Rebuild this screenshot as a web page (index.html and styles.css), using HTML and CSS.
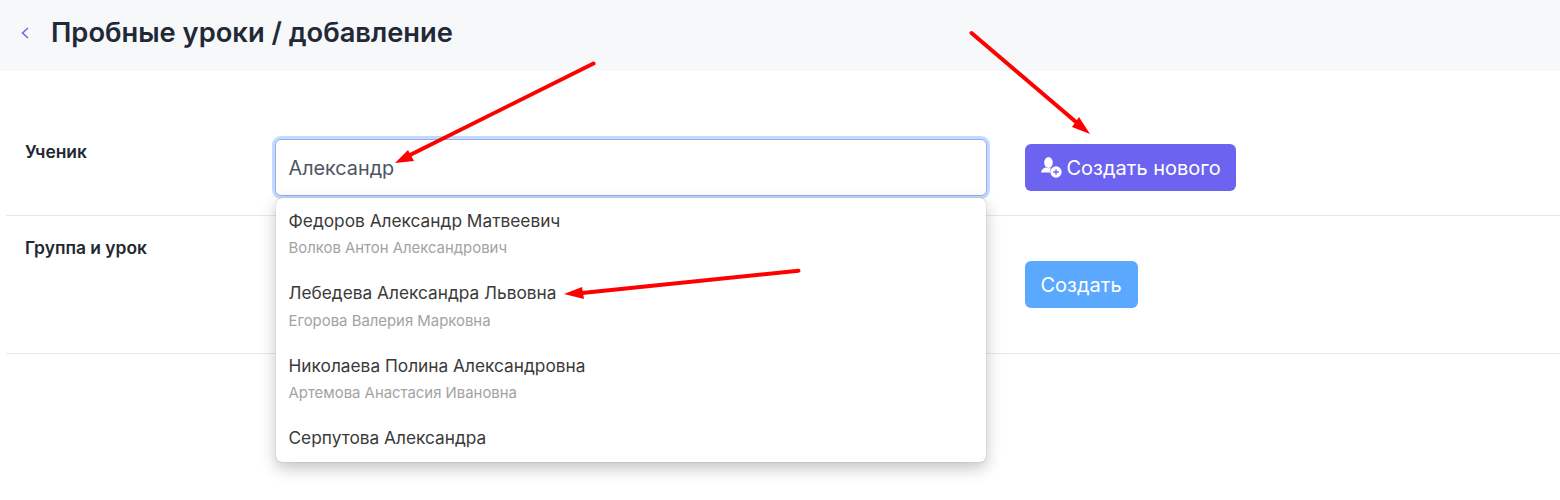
FILE: index.html
```html
<!DOCTYPE html>
<html lang="ru">
<head>
    <meta charset="UTF-8">
    <meta name="viewport" content="width=device-width, initial-scale=1.0">
    <title>Пробные уроки / добавление</title>
    <link rel="stylesheet" href="styles.css">
</head>
<body>
    <header class="page-header">
        <svg class="back-icon" width="8" height="12" viewBox="0 0 8 12"><path d="M7 1 L1.500 6 L7 11" fill="none" stroke="#6c63f0" stroke-width="1.500"/></svg>
        <h1 class="page-title">Пробные уроки / добавление</h1>
    </header>

    <main class="form">
        <div class="row row-student">
            <div class="row-label">Ученик</div>
            <div class="field">
                <div class="input">Александр</div>
                <ul class="dropdown">
                    <li class="option">
                        <div class="option-name">Федоров Александр Матвеевич</div>
                        <div class="option-parent">Волков Антон Александрович</div>
                    </li>
                    <li class="option">
                        <div class="option-name">Лебедева Александра Львовна</div>
                        <div class="option-parent">Егорова Валерия Марковна</div>
                    </li>
                    <li class="option">
                        <div class="option-name">Николаева Полина Александровна</div>
                        <div class="option-parent">Артемова Анастасия Ивановна</div>
                    </li>
                    <li class="option">
                        <div class="option-name">Серпутова Александра</div>
                    </li>
                </ul>
            </div>
            <button class="btn btn-primary">
                <svg class="btn-icon" width="21" height="22" viewBox="0 0 21 22">
                    <ellipse cx="7.500" cy="5.500" rx="4.300" ry="5.400" fill="#fff"/>
                    <path d="M0 15.500 C0.500 12.500 2.500 10.800 4.800 10.200 C6.500 11.500 8.500 11.500 10.300 10.200 C9.200 11.800 8.800 13.800 9.300 15.500 Z" fill="#fff"/>
                    <circle cx="15" cy="15" r="5.700" fill="#fff"/>
                    <path d="M15 12.200 V17.800 M12.200 15 H17.800" stroke="#6c63f0" stroke-width="1.300"/>
                </svg>
                Создать нового
            </button>
        </div>
        <div class="row row-group">
            <div class="row-label">Группа и урок</div>
            <div class="field"></div>
            <button class="btn btn-light">Создать</button>
        </div>
    </main>

    <!-- arrows drawn over the screenshot -->
    <svg class="arrows" width="1560" height="500" viewBox="0 0 1560 500">
        <g fill="#f00" stroke="#f00" stroke-width="4" stroke-linecap="round">
            <line x1="593.500" y1="63.500" x2="410" y2="155"/>
            <polygon points="395,163 408,150 414,161" stroke="none"/>
            <line x1="971.500" y1="33" x2="1076" y2="122"/>
            <polygon points="1090,134 1079,117 1072,127" stroke="none"/>
            <line x1="798.500" y1="270.700" x2="582" y2="293"/>
            <polygon points="564,294 582,287 584,299" stroke="none"/>
        </g>
    </svg>
</body>
</html>
```

FILE: styles.css
```css
* {
    box-sizing: border-box;
}
body {
    position: relative;
    min-height: 500px;
    margin: 0;
    font-family: Inter, "Noto Sans", sans-serif;
    color: #1f2937;
    background: #fff;
}
.page-header {
    display: flex;
    align-items: center;
    height: 71px;
    padding: 0 0 6px 21px;
    background: #f7f8fa;
}
.back-icon {
    margin-right: 22px;
}
.page-title {
    margin: 2px 0 0;
    font-size: 27.300px;
    font-weight: 600;
    line-height: 1.2;
}
.form {
    padding-left: 6px;
}
.row {
    display: flex;
    align-items: flex-start;
    padding-left: 19px;
    border-bottom: 1px solid #e5e7eb;
}
.row-student {
    height: 145px;
    padding-top: 68px;
}
.row-group {
    height: 138px;
    padding-top: 45px;
}
.row-label {
    width: 250px;
    font-size: 17.400px;
    font-weight: 600;
    line-height: 24px;
    color: #222831;
}
.row-student .row-label {
    margin-top: 1px;
}
.row-group .row-label {
    margin-top: -25px;
}
.field {
    position: relative;
    width: 712px;
    margin-right: 38px;
}
.input {
    height: 57px;
    padding: 0 12.500px;
    font-size: 19.800px;
    line-height: 57px;
    color: #4b5563;
    background: #fff;
    border: 1px solid #a5a4f3;
    border-radius: 6px;
    box-shadow: 0 0 0 3px #bfdbfe;
}
.row-student .btn {
    margin-top: 5px;
}
.dropdown {
    position: absolute;
    z-index: 2;
    top: 59px;
    left: 1px;
    right: 1px;
    height: 264px;
    margin: 0;
    padding: 10.500px 12.500px 0;
    list-style: none;
    background: #fff;
    border-radius: 6px;
    box-shadow: 0 0 1px rgba(0, 0, 0, 0.4), 0 6px 16px rgba(0, 0, 0, 0.24);
}
.option {
    height: 72.500px;
}
.option-name {
    font-size: 17.300px;
    line-height: 24px;
    color: #3a3a3a;
}
.option-parent {
    margin-top: 5.500px;
    font-size: 14.900px;
    line-height: 20px;
    color: #a3a3a3;
}
.btn {
    display: inline-flex;
    align-items: center;
    height: 47px;
    padding: 0 15.500px;
    font-family: inherit;
    font-size: 20px;
    color: #fff;
    border: 0;
    border-radius: 6px;
}
.btn-primary {
    background: #6c63f0;
}
.btn-light {
    padding-right: 16.500px;
    background: #5aa9ff;
}
.btn-icon {
    margin-right: 5px;
}
.arrows {
    position: absolute;
    z-index: 3;
    top: 0;
    left: 0;
    pointer-events: none;
}
```
